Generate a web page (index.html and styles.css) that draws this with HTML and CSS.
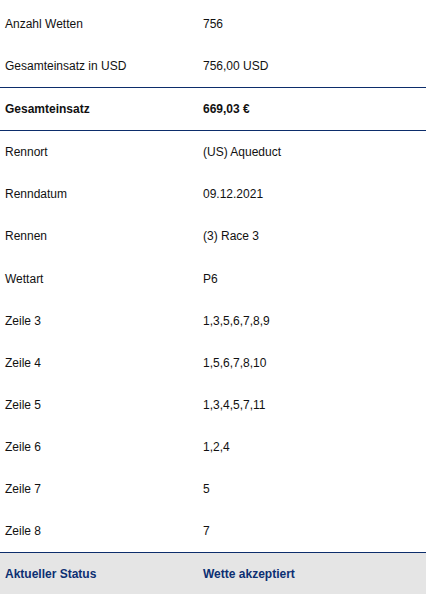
FILE: index.html
```html
<!DOCTYPE html>
<html lang="de">
<head>
<meta charset="utf-8">
<link rel="stylesheet" href="styles.css">
</head>
<body>
<div class="details">
  <div class="row"><span class="label">Anzahl Wetten</span><span class="value">756</span></div>
  <div class="row"><span class="label">Gesamteinsatz in USD</span><span class="value">756,00 USD</span></div>
  <div class="row total"><span class="label">Gesamteinsatz</span><span class="value">669,03 €</span></div>
  <div class="row"><span class="label">Rennort</span><span class="value">(US) Aqueduct</span></div>
  <div class="row"><span class="label">Renndatum</span><span class="value">09.12.2021</span></div>
  <div class="row"><span class="label">Rennen</span><span class="value">(3) Race 3</span></div>
  <div class="row"><span class="label">Wettart</span><span class="value">P6</span></div>
  <div class="row"><span class="label">Zeile 3</span><span class="value">1,3,5,6,7,8,9</span></div>
  <div class="row"><span class="label">Zeile 4</span><span class="value">1,5,6,7,8,10</span></div>
  <div class="row"><span class="label">Zeile 5</span><span class="value">1,3,4,5,7,11</span></div>
  <div class="row"><span class="label">Zeile 6</span><span class="value">1,2,4</span></div>
  <div class="row"><span class="label">Zeile 7</span><span class="value">5</span></div>
  <div class="row"><span class="label">Zeile 8</span><span class="value">7</span></div>
  <div class="row status"><span class="label">Aktueller Status</span><span class="value">Wette akzeptiert</span></div>
</div>
</body>
</html>
```
FILE: styles.css
```css
html, body {
  margin: 0;
  padding: 0;
  background: #ffffff;
}
body {
  font-family: "Liberation Sans", Arial, sans-serif;
  font-size: 12px;
  color: #111111;
}
.details {
  padding-top: 3px;
}
.row {
  display: grid;
  grid-template-columns: 198px 1fr;
  padding: 14px 0 14px 5px;
  line-height: 14.1px;
}
.row.total {
  font-weight: bold;
  border-top: 1px solid #0c2d6b;
  border-bottom: 1px solid #0c2d6b;
}
.row.status {
  font-weight: bold;
  color: #0c2f72;
  background: #e5e5e5;
  border-top: 1px solid #0c2d6b;
  padding-bottom: 20px;
}
```
